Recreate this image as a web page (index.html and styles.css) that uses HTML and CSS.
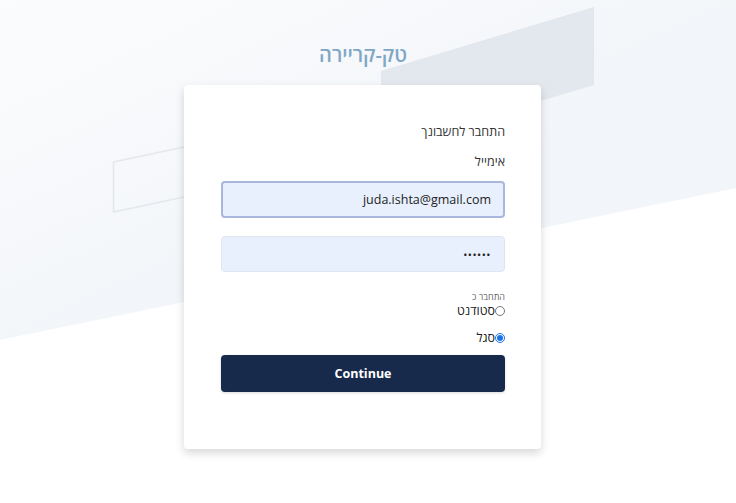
FILE: index.html
```html
<!DOCTYPE html>
<html lang="he" dir="rtl">
<head>
<meta charset="utf-8">
<title>טק-קריירה</title>
<link rel="stylesheet" href="styles.css">
</head>
<body>
<svg class="bg" width="736" height="503" viewBox="0 0 736 503" aria-hidden="true">
  <defs>
    <linearGradient id="g" x1="0" y1="0" x2="1" y2="1">
      <stop offset="0" stop-color="#fbfcfd"/>
      <stop offset="0.6" stop-color="#f2f5f9"/>
    </linearGradient>
  </defs>
  <polygon points="0,0 736,0 736,188 0,340" fill="url(#g)"/>
  <polygon points="381,71 594,7 594,85 381,149" fill="#e3e7ee"/>
  <polygon points="113.5,162 250,133 250,183 113.5,212" fill="none" stroke="#e4e7ec" stroke-width="1.5"/>
</svg>
<main class="page">
  <h1 class="brand">טק-קריירה</h1>
  <form class="card">
    <p class="heading">התחבר לחשבונך</p>
    <label class="label" for="email">אימייל</label>
    <input class="field field-focus" id="email" type="email" value="juda.ishta@gmail.com" dir="ltr">
    <input class="field field-pass" type="password" value="123456" dir="ltr">
    <p class="hint">התחבר כ</p>
    <label class="radio-row"><input class="radio" type="radio" name="role">סטודנט</label>
    <label class="radio-row radio-row-second"><input class="radio" type="radio" name="role" checked>סגל</label>
    <button class="btn" type="button">Continue</button>
  </form>
</main>
</body>
</html>
```
FILE: styles.css
```css
html, body {
  margin: 0;
  padding: 0;
  height: 503px;
  overflow: hidden;
  background: #ffffff;
  font-family: "Open Sans", "Liberation Sans", "DejaVu Sans", sans-serif;
}
.bg {
  position: absolute;
  left: 0;
  top: 0;
  z-index: 0;
}
.page {
  position: relative;
  z-index: 1;
  display: flex;
  flex-direction: column;
  align-items: center;
}
.brand {
  margin: 40px 0 0 0;
  height: 45px;
  line-height: 30px;
  font-size: 20px;
  font-weight: 600;
  color: #80a7c6;
  padding-right: 10px;
}
.card {
  width: 357px;
  box-sizing: border-box;
  background: #ffffff;
  border-radius: 4px;
  box-shadow: 0 4px 10px rgba(0, 0, 0, 0.16);
  padding: 38px 36px 57px 37px;
  display: flex;
  flex-direction: column;
  align-items: stretch;
  margin-right: 11px;
}
.heading {
  margin: 0;
  font-size: 12.5px;
  line-height: 18px;
  color: #333333;
}
.label {
  margin-top: 12px;
  font-size: 12.5px;
  line-height: 18px;
  color: #333333;
}
.field {
  margin: 10px 0 0 0;
  height: 37px;
  box-sizing: border-box;
  border-radius: 4px;
  background: #e8f0fe;
  text-align: right;
  font-family: "Open Sans", "Liberation Sans", sans-serif;
  font-size: 12.5px;
  color: #222222;
  padding: 0 12px;
  outline: none;
}
.field-focus {
  border: 2px solid #a9b6dd;
}
.field-pass {
  margin-top: 18px;
  height: 36px;
  border: 1px solid #dfe5ee;
  font-size: 11px;
  letter-spacing: 0.5px;
  padding-right: 13px;
}
.hint {
  margin: 19px 0 0 0;
  font-size: 9px;
  line-height: 12px;
  color: #666666;
}
.radio-row {
  display: flex;
  align-items: center;
  font-size: 12.5px;
  line-height: 16px;
  color: #222222;
}
.radio-row-second {
  margin-top: 11px;
}
.radio {
  width: 10px;
  height: 10px;
  margin: 0;
  accent-color: #1a73e8;
}
.btn {
  margin-top: 9px;
  height: 37px;
  border: none;
  border-radius: 4px;
  background: #172a4b;
  color: #ffffff;
  font-family: "Open Sans", "Liberation Sans", sans-serif;
  font-weight: 700;
  font-size: 12.5px;
  box-shadow: 0 1px 3px rgba(0, 0, 0, 0.15);
}
```
